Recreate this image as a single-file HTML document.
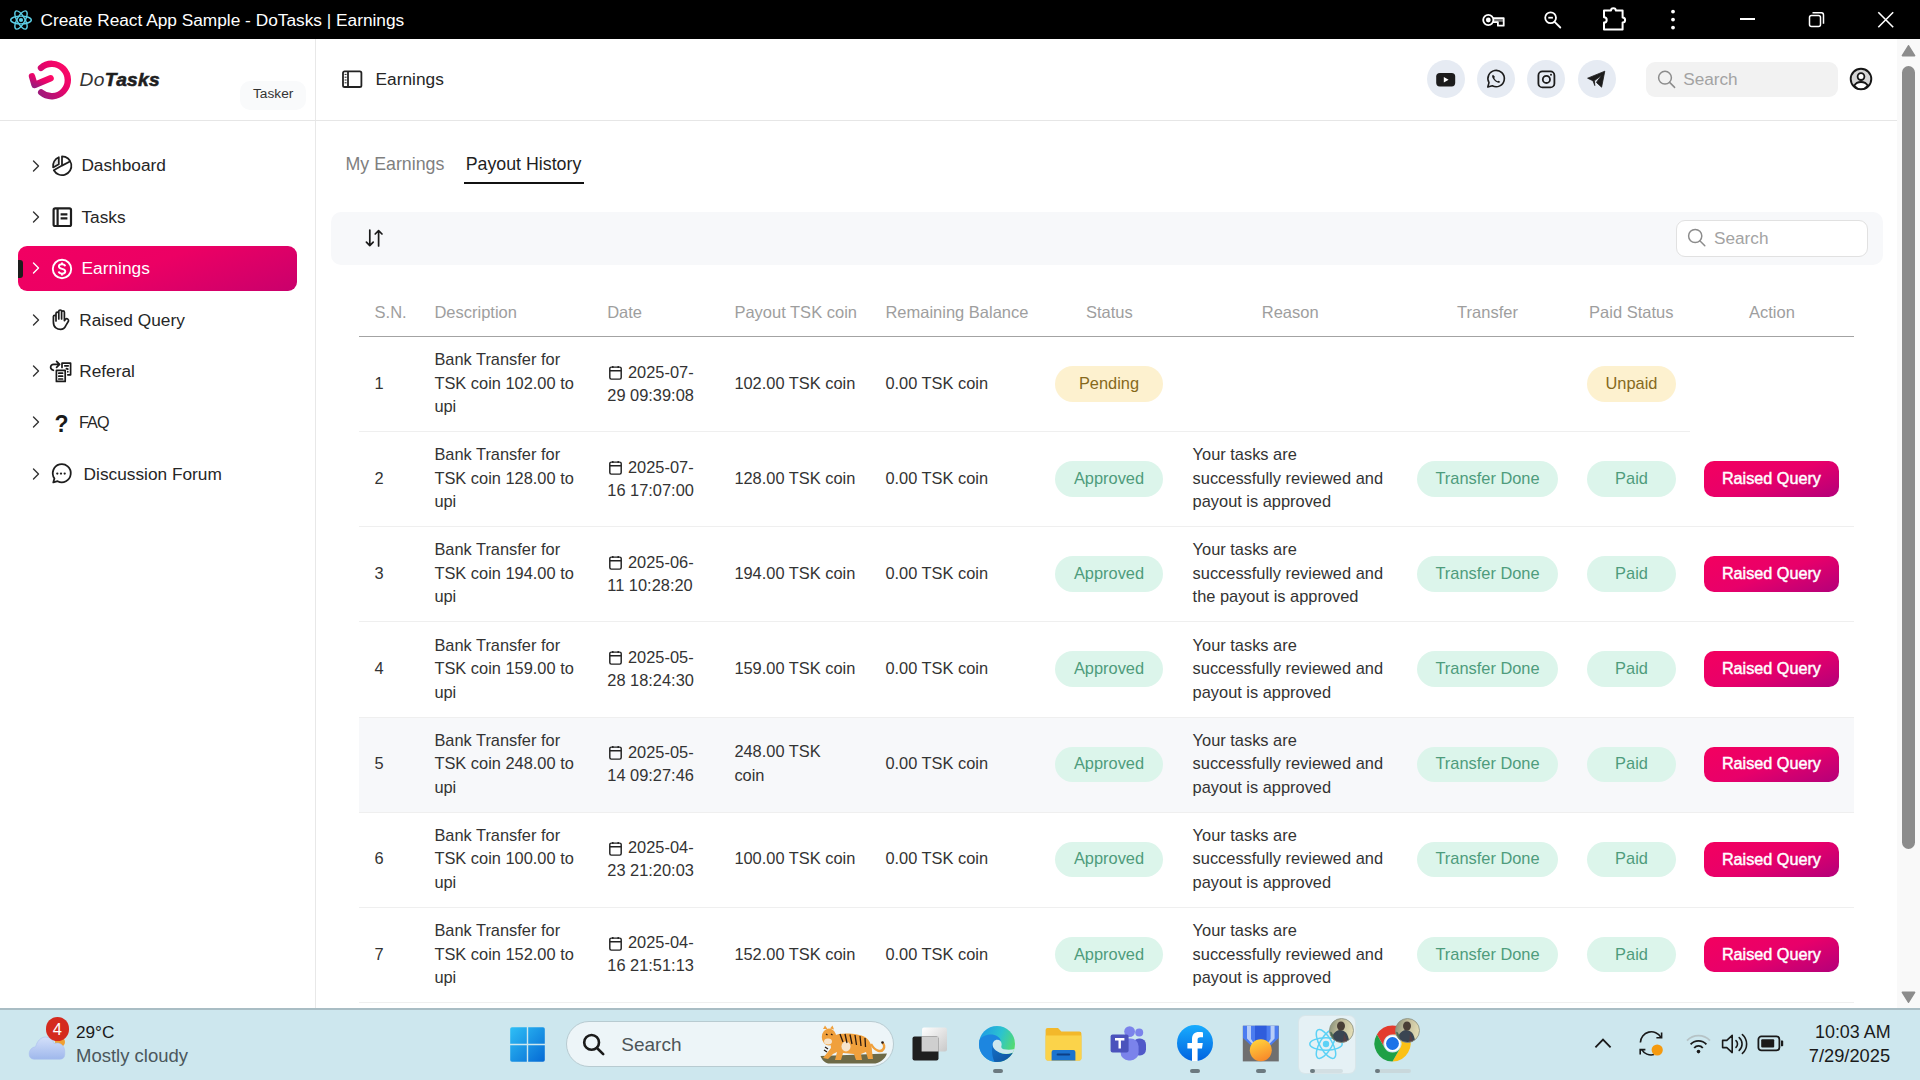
<!DOCTYPE html>
<html><head><meta charset="utf-8">
<style>
*{box-sizing:border-box;margin:0;padding:0}
html,body{width:1920px;height:1080px;overflow:hidden;background:#fff;font-family:"Liberation Sans",sans-serif;color:#262626}
.t{position:absolute;white-space:nowrap}
.b{position:absolute}
.s{position:absolute;overflow:visible}
</style></head><body>
<div class="b" style="left:0px;top:0px;width:1920px;height:39px;background:#000"></div>
<svg class="s" style="left:9px;top:8px;" width="24" height="24" viewBox="-12 -12 24 24"><g fill="none" stroke="#5ccfe6" stroke-width="1.4"><ellipse rx="10.3" ry="3.9"/><ellipse rx="10.3" ry="3.9" transform="rotate(60)"/><ellipse rx="10.3" ry="3.9" transform="rotate(120)"/></g><circle r="2.1" fill="#5ccfe6"/></svg>
<div class="t " style="left:40.5px;top:9.01px;font-size:17.3px;line-height:22px;color:#fff;font-weight:normal;">Create React App Sample - DoTasks | Earnings</div>
<svg class="s" style="left:1480px;top:8px;" width="26" height="22" viewBox="0 0 26 22"><rect x="13" y="10.8" width="10" height="3" fill="#777"/><g fill="none" stroke="#fff" stroke-width="1.8" stroke-linejoin="round"><circle cx="8.3" cy="12" r="5.1"/><path d="M13 10.1 H23.7 V17.7 H17.9 V14.1 H13"/></g><circle cx="8.3" cy="12" r="2.4" fill="#fff"/></svg>
<svg class="s" style="left:1542px;top:10px;" width="22" height="22" viewBox="0 0 22 22"><g fill="none" stroke="#fff" stroke-width="1.8"><circle cx="8.6" cy="7.7" r="5.4"/><path d="M12.6 11.8 L18.3 17.5" stroke-linecap="round"/><path d="M6.3 7.7 H10.9"/></g></svg>
<svg class="s" style="left:1600px;top:4px;" width="30" height="30" viewBox="0 0 30 30"><path d="M4 6.6 H11 A2.4 2.4 0 0 1 15.8 6.6 H22.6 V13.4 A2.5 2.5 0 0 1 22.6 18.4 V25.6 H4 V18.6 A2.6 2.6 0 0 0 4 13.2 Z" fill="none" stroke="#fff" stroke-width="2" stroke-linejoin="round"/></svg>
<svg class="s" style="left:1668px;top:8px;" width="10" height="24" viewBox="0 0 10 24"><circle cx="5" cy="3.6" r="1.9" fill="#fff"/><circle cx="5" cy="11.6" r="1.9" fill="#fff"/><circle cx="5" cy="19.6" r="1.9" fill="#fff"/></svg>
<div class="b" style="left:1740px;top:18px;width:15px;height:1.6px;background:#fff"></div>
<svg class="s" style="left:1806px;top:10px;" width="22" height="22" viewBox="0 0 22 22"><g fill="none" stroke="#fff" stroke-width="1.5"><rect x="3.5" y="5.5" width="11" height="11" rx="2"/><path d="M6.5 2.8 H15.5 A2.2 2.2 0 0 1 17.5 5 V13.8"/></g></svg>
<svg class="s" style="left:1876px;top:10px;" width="20" height="20" viewBox="0 0 20 20"><path d="M2.3 2.3 L17.2 17.2 M17.2 2.3 L2.3 17.2" stroke="#fff" stroke-width="1.6"/></svg>
<div class="b" style="left:315px;top:39px;width:1px;height:969px;background:#e8e8e8"></div>
<div class="b" style="left:0px;top:120px;width:1897px;height:1px;background:#e6e6e6"></div>
<svg class="s" style="left:24px;top:56px;" width="50" height="48" viewBox="0 0 50 48"><defs><linearGradient id="lg1" x1="0" y1="1" x2="1" y2="0"><stop offset="0" stop-color="#9c1b7c"/><stop offset="0.55" stop-color="#e8046a"/><stop offset="1" stop-color="#ff0a66"/></linearGradient></defs>
<g fill="none" stroke="url(#lg1)" stroke-width="6.4" stroke-linecap="round" stroke-linejoin="round">
<path d="M17 11.8 A16.2 16.2 0 1 1 17.2 36.4"/>
<path d="M8 20.4 L10.6 29 L26.6 22.2"/></g></svg>
<div class="t " style="left:79.5px;top:67.65px;font-size:19.2px;line-height:24px;color:#1e1e1e;font-weight:normal;letter-spacing:0.4px"><i style="color:#333">Do</i><b><i style="-webkit-text-stroke:0.6px #1e1e1e;letter-spacing:0.3px">Tasks</i></b></div>
<div class="b" style="left:240px;top:81px;width:66px;height:29px;background:#f9fafb;border-radius:10px"></div>
<div class="t " style="left:253px;top:85.25px;font-size:13.7px;line-height:18px;color:#333;font-weight:normal;">Tasker</div>
<div class="b" style="left:18px;top:246px;width:279px;height:45px;border-radius:9px;background:linear-gradient(160deg,#f20062 0%,#ec0064 45%,#c9006c 100%)"></div>
<div class="b" style="left:18px;top:260px;width:5px;height:18px;background:#1d1d1d;border-radius:0 3px 3px 0"></div>
<svg class="s" style="left:32px;top:159.7px;" width="8" height="13" viewBox="0 0 8 13"><path d="M1.5 1 L6.5 6 L1.5 11" fill="none" stroke="#333" stroke-width="1.4" stroke-linecap="round" stroke-linejoin="round"/></svg>
<svg class="s" style="left:46px;top:150px;" width="32" height="32" viewBox="0 0 32 32"><g fill="none" stroke="#1e1e1e" stroke-width="1.75" stroke-linejoin="round"><path d="M16 15.6 V6.3 A9.4 9.4 0 1 1 7.8 20.3 Z"/><path d="M16 15.6 L24.4 11.3"/><path d="M12.8 7.2 V14.2 L7.1 17.4 A9.4 9.4 0 0 1 12.8 7.2 Z" fill="#e6e6e6"/></g></svg>
<div class="t " style="left:81.4px;top:153.81px;font-size:17.3px;line-height:22px;color:#262626;font-weight:normal;">Dashboard</div>
<svg class="s" style="left:32px;top:210.7px;" width="8" height="13" viewBox="0 0 8 13"><path d="M1.5 1 L6.5 6 L1.5 11" fill="none" stroke="#333" stroke-width="1.4" stroke-linecap="round" stroke-linejoin="round"/></svg>
<svg class="s" style="left:52px;top:207px;" width="21" height="21" viewBox="0 0 21 21"><g fill="none" stroke="#1e1e1e" stroke-width="2.2"><rect x="1.6" y="1.4" width="17.4" height="17.6" rx="1.6"/><path d="M5.6 1.6 V18.8"/><path d="M8.6 7.4 H15.4 M8.6 11.4 H15.4"/></g></svg>
<div class="t " style="left:81.4px;top:205.91px;font-size:17.3px;line-height:22px;color:#262626;font-weight:normal;">Tasks</div>
<svg class="s" style="left:32px;top:261.7px;" width="8" height="13" viewBox="0 0 8 13"><path d="M1.5 1 L6.5 6 L1.5 11" fill="none" stroke="#fff" stroke-width="1.4" stroke-linecap="round" stroke-linejoin="round"/></svg>
<svg class="s" style="left:51px;top:258px;" width="22" height="22" viewBox="0 0 22 22"><g fill="none" stroke="#fff" stroke-width="1.9"><circle cx="11" cy="11" r="9.2"/><path d="M14.2 8.3 C13.8 6.9 12.6 6.3 11 6.3 C9.2 6.3 7.9 7.2 7.9 8.6 C7.9 11.7 14.3 10 14.3 13.3 C14.3 14.9 12.9 15.7 11 15.7 C9.3 15.7 8 15 7.6 13.6 M11 4.4 V6.3 M11 15.7 V17.6" stroke-linecap="butt"/></g></svg>
<div class="t " style="left:81.6px;top:257.01px;font-size:17.3px;line-height:22px;color:#fff;font-weight:normal;">Earnings</div>
<svg class="s" style="left:32px;top:313.7px;" width="8" height="13" viewBox="0 0 8 13"><path d="M1.5 1 L6.5 6 L1.5 11" fill="none" stroke="#333" stroke-width="1.4" stroke-linecap="round" stroke-linejoin="round"/></svg>
<svg class="s" style="left:51px;top:308px;" width="20" height="24" viewBox="0 0 20 24"><path d="M5 13 V5.6 A1.4 1.4 0 0 1 7.8 5.6 V11 V3.4 A1.4 1.4 0 0 1 10.6 3.4 V11 V4.2 A1.4 1.4 0 0 1 13.4 4.2 V12.6 L14.6 11.2 A1.8 1.8 0 0 1 17.4 13.3 L14.8 17.6 C13.6 20.2 11.9 21.4 9.6 21.4 C6.6 21.4 2.4 20 2.4 14 V8.6 A1.3 1.3 0 0 1 5 8.6 Z" fill="none" stroke="#1e1e1e" stroke-width="1.7" stroke-linejoin="round"/></svg>
<div class="t " style="left:79.2px;top:308.81px;font-size:17.3px;line-height:22px;color:#262626;font-weight:normal;">Raised Query</div>
<svg class="s" style="left:32px;top:364.7px;" width="8" height="13" viewBox="0 0 8 13"><path d="M1.5 1 L6.5 6 L1.5 11" fill="none" stroke="#333" stroke-width="1.4" stroke-linecap="round" stroke-linejoin="round"/></svg>
<svg class="s" style="left:46px;top:356px;" width="30" height="30" viewBox="0 0 30 30"><g fill="none" stroke="#1a1a1a" stroke-width="1.7" stroke-linecap="round" stroke-linejoin="round"><path d="M7.4 14.3 C5.6 13.6 4.6 12.6 4.6 11.2 C4.6 9.6 6 8.4 7.6 8.4 H13.4 M10.6 5.4 L13.6 8.4 L10.6 11.4"/><path d="M16 11.4 V7.2 H24.6 V18.8 H21.8"/><path d="M18.8 9.8 H22.2 M20.4 12.6 L21.9 13.1 M21.8 15.6 L21.8 15.8"/><rect x="10.4" y="14.4" width="8.8" height="11"/><path d="M12.8 17.2 H16.6 M12.8 20.2 H16.6 M12.8 23 H16.6"/></g></svg>
<div class="t " style="left:79.2px;top:359.71px;font-size:17.3px;line-height:22px;color:#262626;font-weight:normal;">Referal</div>
<div class="t " style="left:54.5px;top:410.03px;font-size:23px;line-height:28px;color:#1a1a1a;font-weight:bold;">?</div>
<svg class="s" style="left:32px;top:416.2px;" width="8" height="13" viewBox="0 0 8 13"><path d="M1.5 1 L6.5 6 L1.5 11" fill="none" stroke="#333" stroke-width="1.4" stroke-linecap="round" stroke-linejoin="round"/></svg>
<div class="t " style="left:79px;top:411.01px;font-size:17.3px;line-height:22px;color:#262626;font-weight:normal;letter-spacing:-0.9px;font-size:16.2px">FAQ</div>
<svg class="s" style="left:32px;top:468.2px;" width="8" height="13" viewBox="0 0 8 13"><path d="M1.5 1 L6.5 6 L1.5 11" fill="none" stroke="#333" stroke-width="1.4" stroke-linecap="round" stroke-linejoin="round"/></svg>
<svg class="s" style="left:50px;top:463px;" width="22" height="22" viewBox="0 0 22 22"><g fill="none" stroke="#1e1e1e" stroke-width="1.8" stroke-linejoin="round"><path d="M3.3 19.4 L4.4 15.4 A9 9 0 1 1 7.6 18.2 Z"/></g><circle cx="7.3" cy="10.6" r="1.15" fill="#1e1e1e"/><circle cx="11" cy="10.6" r="1.15" fill="#1e1e1e"/><circle cx="14.7" cy="10.6" r="1.15" fill="#1e1e1e"/></svg>
<div class="t " style="left:83.6px;top:462.61px;font-size:17.3px;line-height:22px;color:#262626;font-weight:normal;">Discussion Forum</div>
<svg class="s" style="left:341px;top:69px;" width="22" height="20" viewBox="0 0 22 20"><g fill="none" stroke="#222" stroke-width="1.8"><rect x="2" y="2.4" width="18.4" height="15.6" rx="1.6"/><path d="M7 2.4 V18"/></g><path d="M3.6 5.4 H5.6 M3.6 8.2 H5.6 M3.6 11 H5.6 M3.6 13.8 H5.6" stroke="#222" stroke-width="1"/></svg>
<div class="t " style="left:375.6px;top:68.01px;font-size:17.3px;line-height:22px;color:#262626;font-weight:normal;">Earnings</div>
<div class="b" style="left:1427px;top:60px;width:38px;height:38px;border-radius:50%;background:#e6ebf3"></div>
<div class="b" style="left:1477px;top:60px;width:38px;height:38px;border-radius:50%;background:#e6ebf3"></div>
<div class="b" style="left:1527px;top:60px;width:38px;height:38px;border-radius:50%;background:#e6ebf3"></div>
<div class="b" style="left:1578px;top:60px;width:38px;height:38px;border-radius:50%;background:#e6ebf3"></div>
<svg class="s" style="left:1436px;top:73px;" width="20" height="14" viewBox="0 0 20 14"><rect x="0.2" y="0" width="19" height="13.4" rx="3.6" fill="#1c1c1c"/><path d="M7.8 4 L12.6 6.7 L7.8 9.4 Z" fill="#fff"/></svg>
<svg class="s" style="left:1486px;top:69px;" width="20" height="20" viewBox="0 0 20 20"><g fill="none" stroke="#1c1c1c" stroke-width="1.6" stroke-linejoin="round"><path d="M1.8 18 L3 13.6 A8.2 8.2 0 1 1 6.3 16.8 Z"/></g><path d="M7 5.8 C6.2 6.2 5.9 7 6.4 8.5 C7.2 10.6 9.4 12.8 11.6 13.6 C13 14.1 13.8 13.7 14.3 13 L12.8 11.7 L11.6 12.3 C10.3 11.7 8.9 10.3 8.3 9 L8.9 7.7 Z" fill="#1c1c1c"/></svg>
<svg class="s" style="left:1537px;top:70px;" width="19" height="19" viewBox="0 0 19 19"><g fill="none" stroke="#1c1c1c" stroke-width="1.8"><rect x="1.4" y="1.4" width="16" height="16" rx="4"/><circle cx="9.4" cy="9.4" r="3.6"/></g><circle cx="14" cy="4.8" r="1" fill="#1c1c1c"/></svg>
<svg class="s" style="left:1587px;top:70px;" width="20" height="18" viewBox="0 0 20 18"><path d="M0.6 8.2 L17.8 1.2 L14.6 17.2 L9.4 12.4 L14.6 5.2 L7.4 10.8 L7.8 15.6 L6 10.8 Z" fill="#1c1c1c" stroke="#1c1c1c" stroke-width="0.8" stroke-linejoin="round"/></svg>
<div class="b" style="left:1646px;top:62px;width:192px;height:35px;background:#f2f2f2;border-radius:9px"></div>
<svg class="s" style="left:1657px;top:70px;" width="20" height="20" viewBox="0 0 20 20"><g fill="none" stroke="#8c8c8c" stroke-width="1.5"><circle cx="8" cy="7.7" r="6.4"/><path d="M12.6 12.4 L17.6 17.4" stroke-linecap="round"/></g></svg>
<div class="t " style="left:1683.2px;top:68.04px;font-size:17.2px;line-height:22px;color:#a3a3a3;font-weight:normal;">Search</div>
<svg class="s" style="left:1849px;top:67px;" width="24" height="24" viewBox="0 0 24 24"><circle cx="12" cy="12" r="10.3" fill="#d6d6d6" stroke="#161616" stroke-width="1.9"/><circle cx="12" cy="9.6" r="3.4" fill="#fff" stroke="#161616" stroke-width="1.8"/><path d="M5.2 18.8 C6.6 16.2 9 15 12 15 C15 15 17.4 16.2 18.8 18.8 C17 20.9 14.6 22.2 12 22.2 C9.4 22.2 7 20.9 5.2 18.8 Z" fill="#fff" stroke="#161616" stroke-width="1.8"/></svg>
<div class="b" style="left:1897px;top:39px;width:23px;height:969px;background:#f9f9f9"></div>
<svg class="s" style="left:1900px;top:44px;" width="17" height="14" viewBox="0 0 17 14"><path d="M8.5 1.8 L14.6 11.6 H2.4 Z" fill="#8c8c8c" stroke="#8c8c8c" stroke-width="1.6" stroke-linejoin="round"/></svg>
<div class="b" style="left:1902px;top:66px;width:13px;height:783px;background:#8c8c8c;border-radius:7px"></div>
<svg class="s" style="left:1900px;top:990px;" width="17" height="14" viewBox="0 0 17 14"><path d="M8.5 12.2 L14.6 2.4 H2.4 Z" fill="#8c8c8c" stroke="#8c8c8c" stroke-width="1.6" stroke-linejoin="round"/></svg>
<div class="t " style="left:345.5px;top:152.63px;font-size:17.8px;line-height:22px;color:#7f7f7f;font-weight:normal;">My Earnings</div>
<div class="t " style="left:465.7px;top:152.63px;font-size:17.8px;line-height:22px;color:#1f1f1f;font-weight:normal;">Payout History</div>
<div class="b" style="left:464px;top:182px;width:120px;height:2px;background:#111"></div>
<div class="b" style="left:331px;top:212px;width:1552px;height:53px;background:#f7f8fa;border-radius:10px"></div>
<svg class="s" style="left:364px;top:228px;" width="20" height="20" viewBox="0 0 20 20"><g fill="none" stroke="#1a1a1a" stroke-width="1.7" stroke-linecap="round" stroke-linejoin="round"><path d="M5.8 2 V17.6 M2.4 14.2 L5.8 17.6 L9.2 14.2"/><path d="M14.6 18 V2.6 M11.2 6 L14.6 2.6 L18 6"/></g></svg>
<div class="b" style="left:1676px;top:220px;width:192px;height:37px;background:#fff;border:1px solid #e1e1e1;border-radius:9px"></div>
<svg class="s" style="left:1687px;top:228px;" width="20" height="20" viewBox="0 0 20 20"><g fill="none" stroke="#8c8c8c" stroke-width="1.5"><circle cx="8.2" cy="8" r="6.6"/><path d="M12.8 12.8 L17.8 17.8" stroke-linecap="round"/></g></svg>
<div class="t " style="left:1714px;top:227.04px;font-size:17.2px;line-height:22px;color:#a3a3a3;font-weight:normal;">Search</div>
<div class="t " style="left:374.6px;top:301.28px;font-size:16.5px;line-height:22px;color:#9e9e9e;font-weight:normal;">S.N.</div>
<div class="t " style="left:434.4px;top:301.28px;font-size:16.5px;line-height:22px;color:#9e9e9e;font-weight:normal;">Description</div>
<div class="t " style="left:607.2px;top:301.28px;font-size:16.5px;line-height:22px;color:#9e9e9e;font-weight:normal;">Date</div>
<div class="t " style="left:734.4px;top:301.28px;font-size:16.5px;line-height:22px;color:#9e9e9e;font-weight:normal;">Payout TSK coin</div>
<div class="t " style="left:885.4px;top:301.28px;font-size:16.5px;line-height:22px;color:#9e9e9e;font-weight:normal;">Remaining Balance</div>
<div class="t" style="left:1009.4000000000001px;width:200px;text-align:center;top:301.28px;font-size:16.5px;line-height:22px;color:#9e9e9e;font-weight:normal;">Status</div>
<div class="t" style="left:1190.2px;width:200px;text-align:center;top:301.28px;font-size:16.5px;line-height:22px;color:#9e9e9e;font-weight:normal;">Reason</div>
<div class="t" style="left:1387.5px;width:200px;text-align:center;top:301.28px;font-size:16.5px;line-height:22px;color:#9e9e9e;font-weight:normal;">Transfer</div>
<div class="t" style="left:1531.3px;width:200px;text-align:center;top:301.28px;font-size:16.5px;line-height:22px;color:#9e9e9e;font-weight:normal;">Paid Status</div>
<div class="t" style="left:1671.9px;width:200px;text-align:center;top:301.28px;font-size:16.5px;line-height:22px;color:#9e9e9e;font-weight:normal;">Action</div>
<div class="b" style="left:359px;top:336px;width:1495px;height:1.2px;background:#a3a3a3"></div>
<div class="b" style="left:359px;top:431px;width:1331px;height:1px;background:#efefef"></div>
<div class="t " style="left:374.6px;top:371.67px;font-size:16.4px;line-height:23.5px;color:#333333;font-weight:normal;">1</div>
<div class="t " style="left:434.4px;top:348.17px;font-size:16.4px;line-height:23.5px;color:#333333;font-weight:normal;">Bank Transfer for<br>TSK coin 102.00 to<br>upi</div>
<svg class="s" style="left:607.5px;top:364.9px;" width="15" height="15" viewBox="0 0 15 15"><g fill="none" stroke="#222" stroke-width="1.45"><rect x="1.8" y="2.1" width="11.4" height="12" rx="1.5"/><path d="M1.8 5.7 H13.2 M4.8 1 V3 M10.2 1 V3"/></g></svg>
<div class="t " style="left:628px;top:360.62px;font-size:16.4px;line-height:23.5px;color:#333333;font-weight:normal;">2025-07-</div>
<div class="t " style="left:607.3px;top:383.62px;font-size:16.4px;line-height:23.5px;color:#333333;font-weight:normal;">29 09:39:08</div>
<div class="t " style="left:734.4px;top:371.67px;font-size:16.4px;line-height:23.5px;color:#333333;font-weight:normal;">102.00 TSK coin</div>
<div class="t " style="left:885.4px;top:371.67px;font-size:16.4px;line-height:23.5px;color:#333333;font-weight:normal;">0.00 TSK coin</div>
<div class="b" style="left:1055px;top:366px;width:108px;height:35.6px;background:#fdf1cf;border-radius:18px"></div>
<div class="t" style="left:1055.0px;width:108px;text-align:center;top:371.67px;font-size:16.4px;line-height:23.5px;color:#86691c;font-weight:normal;">Pending</div>
<div class="b" style="left:1587px;top:366px;width:89px;height:35.6px;background:#fdf1cf;border-radius:18px"></div>
<div class="t" style="left:1587.0px;width:89px;text-align:center;top:371.67px;font-size:16.4px;line-height:23.5px;color:#86691c;font-weight:normal;">Unpaid</div>
<div class="b" style="left:359px;top:526px;width:1495px;height:1px;background:#efefef"></div>
<div class="t " style="left:374.6px;top:466.67px;font-size:16.4px;line-height:23.5px;color:#333333;font-weight:normal;">2</div>
<div class="t " style="left:434.4px;top:443.17px;font-size:16.4px;line-height:23.5px;color:#333333;font-weight:normal;">Bank Transfer for<br>TSK coin 128.00 to<br>upi</div>
<svg class="s" style="left:607.5px;top:459.9px;" width="15" height="15" viewBox="0 0 15 15"><g fill="none" stroke="#222" stroke-width="1.45"><rect x="1.8" y="2.1" width="11.4" height="12" rx="1.5"/><path d="M1.8 5.7 H13.2 M4.8 1 V3 M10.2 1 V3"/></g></svg>
<div class="t " style="left:628px;top:455.62px;font-size:16.4px;line-height:23.5px;color:#333333;font-weight:normal;">2025-07-</div>
<div class="t " style="left:607.3px;top:478.62px;font-size:16.4px;line-height:23.5px;color:#333333;font-weight:normal;">16 17:07:00</div>
<div class="t " style="left:734.4px;top:466.67px;font-size:16.4px;line-height:23.5px;color:#333333;font-weight:normal;">128.00 TSK coin</div>
<div class="t " style="left:885.4px;top:466.67px;font-size:16.4px;line-height:23.5px;color:#333333;font-weight:normal;">0.00 TSK coin</div>
<div class="b" style="left:1055px;top:461.0px;width:108px;height:35.6px;background:#dcf5eb;border-radius:18px"></div>
<div class="t" style="left:1055.0px;width:108px;text-align:center;top:466.67px;font-size:16.4px;line-height:23.5px;color:#4e9c7c;font-weight:normal;">Approved</div>
<div class="t " style="left:1192.6px;top:443.17px;font-size:16.4px;line-height:23.5px;color:#333333;font-weight:normal;">Your tasks are<br>successfully reviewed and<br>payout is approved</div>
<div class="b" style="left:1417px;top:461.0px;width:141px;height:35.6px;background:#dcf5eb;border-radius:18px"></div>
<div class="t" style="left:1417.0px;width:141px;text-align:center;top:466.67px;font-size:16.4px;line-height:23.5px;color:#4e9c7c;font-weight:normal;">Transfer Done</div>
<div class="b" style="left:1587px;top:461.0px;width:89px;height:35.6px;background:#dcf5eb;border-radius:18px"></div>
<div class="t" style="left:1587.0px;width:89px;text-align:center;top:466.67px;font-size:16.4px;line-height:23.5px;color:#4e9c7c;font-weight:normal;">Paid</div>
<div class="b" style="left:1704px;top:461.0px;width:135px;height:35.6px;border-radius:10px;background:linear-gradient(160deg,#f3005f 0%,#e8006a 50%,#b3007a 100%)"></div>
<div class="t" style="left:1703.9px;width:135px;text-align:center;top:466.94px;font-size:16.2px;line-height:23.5px;color:#fff;font-weight:normal;-webkit-text-stroke:0.45px #fff">Raised Query</div>
<div class="b" style="left:359px;top:621px;width:1495px;height:1px;background:#efefef"></div>
<div class="t " style="left:374.6px;top:561.84px;font-size:16.4px;line-height:23.5px;color:#333333;font-weight:normal;">3</div>
<div class="t " style="left:434.4px;top:538.34px;font-size:16.4px;line-height:23.5px;color:#333333;font-weight:normal;">Bank Transfer for<br>TSK coin 194.00 to<br>upi</div>
<svg class="s" style="left:607.5px;top:555.0699999999999px;" width="15" height="15" viewBox="0 0 15 15"><g fill="none" stroke="#222" stroke-width="1.45"><rect x="1.8" y="2.1" width="11.4" height="12" rx="1.5"/><path d="M1.8 5.7 H13.2 M4.8 1 V3 M10.2 1 V3"/></g></svg>
<div class="t " style="left:628px;top:550.79px;font-size:16.4px;line-height:23.5px;color:#333333;font-weight:normal;">2025-06-</div>
<div class="t " style="left:607.3px;top:573.79px;font-size:16.4px;line-height:23.5px;color:#333333;font-weight:normal;">11 10:28:20</div>
<div class="t " style="left:734.4px;top:561.84px;font-size:16.4px;line-height:23.5px;color:#333333;font-weight:normal;">194.00 TSK coin</div>
<div class="t " style="left:885.4px;top:561.84px;font-size:16.4px;line-height:23.5px;color:#333333;font-weight:normal;">0.00 TSK coin</div>
<div class="b" style="left:1055px;top:556.17px;width:108px;height:35.6px;background:#dcf5eb;border-radius:18px"></div>
<div class="t" style="left:1055.0px;width:108px;text-align:center;top:561.84px;font-size:16.4px;line-height:23.5px;color:#4e9c7c;font-weight:normal;">Approved</div>
<div class="t " style="left:1192.6px;top:538.34px;font-size:16.4px;line-height:23.5px;color:#333333;font-weight:normal;">Your tasks are<br>successfully reviewed and<br>the payout is approved</div>
<div class="b" style="left:1417px;top:556.17px;width:141px;height:35.6px;background:#dcf5eb;border-radius:18px"></div>
<div class="t" style="left:1417.0px;width:141px;text-align:center;top:561.84px;font-size:16.4px;line-height:23.5px;color:#4e9c7c;font-weight:normal;">Transfer Done</div>
<div class="b" style="left:1587px;top:556.17px;width:89px;height:35.6px;background:#dcf5eb;border-radius:18px"></div>
<div class="t" style="left:1587.0px;width:89px;text-align:center;top:561.84px;font-size:16.4px;line-height:23.5px;color:#4e9c7c;font-weight:normal;">Paid</div>
<div class="b" style="left:1704px;top:556.17px;width:135px;height:35.6px;border-radius:10px;background:linear-gradient(160deg,#f3005f 0%,#e8006a 50%,#b3007a 100%)"></div>
<div class="t" style="left:1703.9px;width:135px;text-align:center;top:562.11px;font-size:16.2px;line-height:23.5px;color:#fff;font-weight:normal;-webkit-text-stroke:0.45px #fff">Raised Query</div>
<div class="b" style="left:359px;top:717px;width:1495px;height:1px;background:#efefef"></div>
<div class="t " style="left:374.6px;top:657.01px;font-size:16.4px;line-height:23.5px;color:#333333;font-weight:normal;">4</div>
<div class="t " style="left:434.4px;top:633.51px;font-size:16.4px;line-height:23.5px;color:#333333;font-weight:normal;">Bank Transfer for<br>TSK coin 159.00 to<br>upi</div>
<svg class="s" style="left:607.5px;top:650.24px;" width="15" height="15" viewBox="0 0 15 15"><g fill="none" stroke="#222" stroke-width="1.45"><rect x="1.8" y="2.1" width="11.4" height="12" rx="1.5"/><path d="M1.8 5.7 H13.2 M4.8 1 V3 M10.2 1 V3"/></g></svg>
<div class="t " style="left:628px;top:645.96px;font-size:16.4px;line-height:23.5px;color:#333333;font-weight:normal;">2025-05-</div>
<div class="t " style="left:607.3px;top:668.96px;font-size:16.4px;line-height:23.5px;color:#333333;font-weight:normal;">28 18:24:30</div>
<div class="t " style="left:734.4px;top:657.01px;font-size:16.4px;line-height:23.5px;color:#333333;font-weight:normal;">159.00 TSK coin</div>
<div class="t " style="left:885.4px;top:657.01px;font-size:16.4px;line-height:23.5px;color:#333333;font-weight:normal;">0.00 TSK coin</div>
<div class="b" style="left:1055px;top:651.34px;width:108px;height:35.6px;background:#dcf5eb;border-radius:18px"></div>
<div class="t" style="left:1055.0px;width:108px;text-align:center;top:657.01px;font-size:16.4px;line-height:23.5px;color:#4e9c7c;font-weight:normal;">Approved</div>
<div class="t " style="left:1192.6px;top:633.51px;font-size:16.4px;line-height:23.5px;color:#333333;font-weight:normal;">Your tasks are<br>successfully reviewed and<br>payout is approved</div>
<div class="b" style="left:1417px;top:651.34px;width:141px;height:35.6px;background:#dcf5eb;border-radius:18px"></div>
<div class="t" style="left:1417.0px;width:141px;text-align:center;top:657.01px;font-size:16.4px;line-height:23.5px;color:#4e9c7c;font-weight:normal;">Transfer Done</div>
<div class="b" style="left:1587px;top:651.34px;width:89px;height:35.6px;background:#dcf5eb;border-radius:18px"></div>
<div class="t" style="left:1587.0px;width:89px;text-align:center;top:657.01px;font-size:16.4px;line-height:23.5px;color:#4e9c7c;font-weight:normal;">Paid</div>
<div class="b" style="left:1704px;top:651.34px;width:135px;height:35.6px;border-radius:10px;background:linear-gradient(160deg,#f3005f 0%,#e8006a 50%,#b3007a 100%)"></div>
<div class="t" style="left:1703.9px;width:135px;text-align:center;top:657.28px;font-size:16.2px;line-height:23.5px;color:#fff;font-weight:normal;-webkit-text-stroke:0.45px #fff">Raised Query</div>
<div class="b" style="left:359px;top:718px;width:1495px;height:94px;background:#f7f8fa"></div>
<div class="b" style="left:359px;top:812px;width:1495px;height:1px;background:#efefef"></div>
<div class="t " style="left:374.6px;top:752.18px;font-size:16.4px;line-height:23.5px;color:#333333;font-weight:normal;">5</div>
<div class="t " style="left:434.4px;top:728.68px;font-size:16.4px;line-height:23.5px;color:#333333;font-weight:normal;">Bank Transfer for<br>TSK coin 248.00 to<br>upi</div>
<svg class="s" style="left:607.5px;top:745.41px;" width="15" height="15" viewBox="0 0 15 15"><g fill="none" stroke="#222" stroke-width="1.45"><rect x="1.8" y="2.1" width="11.4" height="12" rx="1.5"/><path d="M1.8 5.7 H13.2 M4.8 1 V3 M10.2 1 V3"/></g></svg>
<div class="t " style="left:628px;top:741.13px;font-size:16.4px;line-height:23.5px;color:#333333;font-weight:normal;">2025-05-</div>
<div class="t " style="left:607.3px;top:764.13px;font-size:16.4px;line-height:23.5px;color:#333333;font-weight:normal;">14 09:27:46</div>
<div class="t " style="left:734.4px;top:740.43px;font-size:16.4px;line-height:23.5px;color:#333333;font-weight:normal;">248.00 TSK<br>coin</div>
<div class="t " style="left:885.4px;top:752.18px;font-size:16.4px;line-height:23.5px;color:#333333;font-weight:normal;">0.00 TSK coin</div>
<div class="b" style="left:1055px;top:746.51px;width:108px;height:35.6px;background:#dcf5eb;border-radius:18px"></div>
<div class="t" style="left:1055.0px;width:108px;text-align:center;top:752.18px;font-size:16.4px;line-height:23.5px;color:#4e9c7c;font-weight:normal;">Approved</div>
<div class="t " style="left:1192.6px;top:728.68px;font-size:16.4px;line-height:23.5px;color:#333333;font-weight:normal;">Your tasks are<br>successfully reviewed and<br>payout is approved</div>
<div class="b" style="left:1417px;top:746.51px;width:141px;height:35.6px;background:#dcf5eb;border-radius:18px"></div>
<div class="t" style="left:1417.0px;width:141px;text-align:center;top:752.18px;font-size:16.4px;line-height:23.5px;color:#4e9c7c;font-weight:normal;">Transfer Done</div>
<div class="b" style="left:1587px;top:746.51px;width:89px;height:35.6px;background:#dcf5eb;border-radius:18px"></div>
<div class="t" style="left:1587.0px;width:89px;text-align:center;top:752.18px;font-size:16.4px;line-height:23.5px;color:#4e9c7c;font-weight:normal;">Paid</div>
<div class="b" style="left:1704px;top:746.51px;width:135px;height:35.6px;border-radius:10px;background:linear-gradient(160deg,#f3005f 0%,#e8006a 50%,#b3007a 100%)"></div>
<div class="t" style="left:1703.9px;width:135px;text-align:center;top:752.45px;font-size:16.2px;line-height:23.5px;color:#fff;font-weight:normal;-webkit-text-stroke:0.45px #fff">Raised Query</div>
<div class="b" style="left:359px;top:907px;width:1495px;height:1px;background:#efefef"></div>
<div class="t " style="left:374.6px;top:847.35px;font-size:16.4px;line-height:23.5px;color:#333333;font-weight:normal;">6</div>
<div class="t " style="left:434.4px;top:823.85px;font-size:16.4px;line-height:23.5px;color:#333333;font-weight:normal;">Bank Transfer for<br>TSK coin 100.00 to<br>upi</div>
<svg class="s" style="left:607.5px;top:840.58px;" width="15" height="15" viewBox="0 0 15 15"><g fill="none" stroke="#222" stroke-width="1.45"><rect x="1.8" y="2.1" width="11.4" height="12" rx="1.5"/><path d="M1.8 5.7 H13.2 M4.8 1 V3 M10.2 1 V3"/></g></svg>
<div class="t " style="left:628px;top:836.30px;font-size:16.4px;line-height:23.5px;color:#333333;font-weight:normal;">2025-04-</div>
<div class="t " style="left:607.3px;top:859.30px;font-size:16.4px;line-height:23.5px;color:#333333;font-weight:normal;">23 21:20:03</div>
<div class="t " style="left:734.4px;top:847.35px;font-size:16.4px;line-height:23.5px;color:#333333;font-weight:normal;">100.00 TSK coin</div>
<div class="t " style="left:885.4px;top:847.35px;font-size:16.4px;line-height:23.5px;color:#333333;font-weight:normal;">0.00 TSK coin</div>
<div class="b" style="left:1055px;top:841.6800000000001px;width:108px;height:35.6px;background:#dcf5eb;border-radius:18px"></div>
<div class="t" style="left:1055.0px;width:108px;text-align:center;top:847.35px;font-size:16.4px;line-height:23.5px;color:#4e9c7c;font-weight:normal;">Approved</div>
<div class="t " style="left:1192.6px;top:823.85px;font-size:16.4px;line-height:23.5px;color:#333333;font-weight:normal;">Your tasks are<br>successfully reviewed and<br>payout is approved</div>
<div class="b" style="left:1417px;top:841.6800000000001px;width:141px;height:35.6px;background:#dcf5eb;border-radius:18px"></div>
<div class="t" style="left:1417.0px;width:141px;text-align:center;top:847.35px;font-size:16.4px;line-height:23.5px;color:#4e9c7c;font-weight:normal;">Transfer Done</div>
<div class="b" style="left:1587px;top:841.6800000000001px;width:89px;height:35.6px;background:#dcf5eb;border-radius:18px"></div>
<div class="t" style="left:1587.0px;width:89px;text-align:center;top:847.35px;font-size:16.4px;line-height:23.5px;color:#4e9c7c;font-weight:normal;">Paid</div>
<div class="b" style="left:1704px;top:841.6800000000001px;width:135px;height:35.6px;border-radius:10px;background:linear-gradient(160deg,#f3005f 0%,#e8006a 50%,#b3007a 100%)"></div>
<div class="t" style="left:1703.9px;width:135px;text-align:center;top:847.62px;font-size:16.2px;line-height:23.5px;color:#fff;font-weight:normal;-webkit-text-stroke:0.45px #fff">Raised Query</div>
<div class="b" style="left:359px;top:1002px;width:1495px;height:1px;background:#efefef"></div>
<div class="t " style="left:374.6px;top:942.52px;font-size:16.4px;line-height:23.5px;color:#333333;font-weight:normal;">7</div>
<div class="t " style="left:434.4px;top:919.02px;font-size:16.4px;line-height:23.5px;color:#333333;font-weight:normal;">Bank Transfer for<br>TSK coin 152.00 to<br>upi</div>
<svg class="s" style="left:607.5px;top:935.75px;" width="15" height="15" viewBox="0 0 15 15"><g fill="none" stroke="#222" stroke-width="1.45"><rect x="1.8" y="2.1" width="11.4" height="12" rx="1.5"/><path d="M1.8 5.7 H13.2 M4.8 1 V3 M10.2 1 V3"/></g></svg>
<div class="t " style="left:628px;top:931.47px;font-size:16.4px;line-height:23.5px;color:#333333;font-weight:normal;">2025-04-</div>
<div class="t " style="left:607.3px;top:954.47px;font-size:16.4px;line-height:23.5px;color:#333333;font-weight:normal;">16 21:51:13</div>
<div class="t " style="left:734.4px;top:942.52px;font-size:16.4px;line-height:23.5px;color:#333333;font-weight:normal;">152.00 TSK coin</div>
<div class="t " style="left:885.4px;top:942.52px;font-size:16.4px;line-height:23.5px;color:#333333;font-weight:normal;">0.00 TSK coin</div>
<div class="b" style="left:1055px;top:936.85px;width:108px;height:35.6px;background:#dcf5eb;border-radius:18px"></div>
<div class="t" style="left:1055.0px;width:108px;text-align:center;top:942.52px;font-size:16.4px;line-height:23.5px;color:#4e9c7c;font-weight:normal;">Approved</div>
<div class="t " style="left:1192.6px;top:919.02px;font-size:16.4px;line-height:23.5px;color:#333333;font-weight:normal;">Your tasks are<br>successfully reviewed and<br>payout is approved</div>
<div class="b" style="left:1417px;top:936.85px;width:141px;height:35.6px;background:#dcf5eb;border-radius:18px"></div>
<div class="t" style="left:1417.0px;width:141px;text-align:center;top:942.52px;font-size:16.4px;line-height:23.5px;color:#4e9c7c;font-weight:normal;">Transfer Done</div>
<div class="b" style="left:1587px;top:936.85px;width:89px;height:35.6px;background:#dcf5eb;border-radius:18px"></div>
<div class="t" style="left:1587.0px;width:89px;text-align:center;top:942.52px;font-size:16.4px;line-height:23.5px;color:#4e9c7c;font-weight:normal;">Paid</div>
<div class="b" style="left:1704px;top:936.85px;width:135px;height:35.6px;border-radius:10px;background:linear-gradient(160deg,#f3005f 0%,#e8006a 50%,#b3007a 100%)"></div>
<div class="t" style="left:1703.9px;width:135px;text-align:center;top:942.79px;font-size:16.2px;line-height:23.5px;color:#fff;font-weight:normal;-webkit-text-stroke:0.45px #fff">Raised Query</div>
<div class="b" style="left:0px;top:1008px;width:1920px;height:72px;background:#cde7ee"></div>
<div class="b" style="left:0px;top:1008px;width:1920px;height:2px;background:#a9bdc4"></div>
<svg class="s" style="left:26px;top:1034px;" width="42" height="28" viewBox="0 0 42 28"><defs><linearGradient id="cl" x1="0" y1="0" x2="0" y2="1"><stop offset="0" stop-color="#d4e0fa"/><stop offset="1" stop-color="#9fb8ec"/></linearGradient></defs><circle cx="34" cy="8" r="5" fill="#f0a030"/><path d="M8 25.2 C4.8 25.2 3.2 23 3.2 20 C3.2 16.4 5.6 13.2 9.6 12.8 C11 7 15.2 3 19.4 3 C23.6 3 26.8 5.8 28 9.6 C29.2 9 30.6 8.8 32 9 C35.8 9.6 38.7 13 38.7 17.4 V20.4 C38.7 23.4 37 25.2 34 25.2 Z" fill="url(#cl)" stroke="#a9bfee" stroke-width="0.6"/></svg>
<div class="b" style="left:45.5px;top:1017.4px;width:23.6px;height:23.6px;background:#d42a1e;border-radius:50%"></div>
<div class="t" style="left:45.8px;width:23px;text-align:center;top:1019.08px;font-size:16.5px;line-height:20px;color:#fff;font-weight:normal;">4</div>
<div class="t " style="left:76px;top:1021.04px;font-size:17.2px;line-height:22px;color:#1a1a1a;font-weight:normal;">29°C</div>
<div class="t " style="left:76px;top:1044.59px;font-size:18.5px;line-height:22px;color:#4b575c;font-weight:normal;">Mostly cloudy</div>
<svg class="s" style="left:510px;top:1027px;" width="35" height="35" viewBox="0 0 35 35"><defs><linearGradient id="wl" gradientUnits="userSpaceOnUse" x1="0" y1="0" x2="35" y2="35"><stop offset="0" stop-color="#2fc0f6"/><stop offset="1" stop-color="#0569d4"/></linearGradient></defs><g fill="url(#wl)"><path d="M2 0.2 H16.8 V16.8 H0.2 V2 A1.8 1.8 0 0 1 2 0.2 Z"/><path d="M18.2 0.2 H33 A1.8 1.8 0 0 1 34.8 2 V16.8 H18.2 Z"/><path d="M0.2 18.2 H16.8 V34.8 H2 A1.8 1.8 0 0 1 0.2 33 Z"/><path d="M18.2 18.2 H34.8 V33 A1.8 1.8 0 0 1 33 34.8 H18.2 Z"/></g></svg>
<div class="b" style="left:566px;top:1021px;width:328px;height:46px;background:#edf5f8;border:1px solid #b8cbd1;border-radius:23px"></div>
<svg class="s" style="left:582px;top:1033px;" width="24" height="24" viewBox="0 0 24 24"><g fill="none" stroke="#1a1a1a" stroke-width="2.6"><circle cx="9.6" cy="9.4" r="7.4"/><path d="M15 15 L21.2 21.2" stroke-linecap="round"/></g></svg>
<div class="t " style="left:621.25px;top:1033.42px;font-size:19px;line-height:24px;color:#4e5558;font-weight:normal;">Search</div>
<svg class="s" style="left:818px;top:1024px;" width="72" height="42" viewBox="0 0 72 42"><path d="M2.5 32 L69 29.5 C67 35 62 39.6 55 39.6 H12 C7 39.6 4 36 2.5 32 Z" fill="#6e6a47"/><path d="M15 12 C22 8 40 9 47 13 C52 16 54 22 54 27 L55 35 L50 35 L48 28 L43 30 L44 36 L38 36 L36 30 L25 29 L23 36 L17 36 L19 28 L15 30 L10 35 L5 34 L13 24 C12 20 13 15 15 12 Z" fill="#f0a03c"/><path d="M53 20 C57 27 63 29 65.5 25 C66.6 23 66.4 20 64.4 19" stroke="#f0a03c" stroke-width="2.4" fill="none"/><ellipse cx="11" cy="13" rx="7.2" ry="8.6" fill="#f0a03c"/><path d="M5 5 L7 1.5 L9.5 5 M12 4.5 L14.5 1.5 L16 5.5" fill="#f0a03c"/><ellipse cx="10" cy="17.5" rx="4" ry="3" fill="#f6e4cc"/><ellipse cx="28" cy="22.5" rx="4.5" ry="5" fill="#f6e4cc"/><g stroke="#2b1a10" stroke-width="1.3" fill="none"><path d="M22 10 L25 18 M27 10 L29 19 M32 10.5 L34 20 M37 11 L38.5 21 M42 12 L43 22 M47 14 L47.5 23 M8 10 L9.5 11 M13 10 L14.5 11 M6 26 L9 28 M7 23 L10 25"/></g><circle cx="64.5" cy="18.5" r="1.3" fill="#2b1a10"/></svg>
<svg class="s" style="left:912px;top:1027px;" width="36" height="34" viewBox="0 0 36 34"><defs><linearGradient id="tvl" x1="0" y1="0" x2="1" y2="1"><stop offset="0" stop-color="#ffffff"/><stop offset="1" stop-color="#c9c9c9"/></linearGradient></defs><rect x="10" y="0.5" width="25" height="24" rx="2" fill="url(#tvl)"/><rect x="0.5" y="9.5" width="26" height="24" rx="2" fill="#1f1f1f"/><rect x="9.6" y="9.5" width="17" height="15" fill="#cfcfcf"/></svg>
<svg class="s" style="left:978px;top:1025px;" width="38" height="38" viewBox="0 0 38 38"><defs><linearGradient id="e1" x1="0" y1="0.3" x2="1" y2="0.7"><stop offset="0" stop-color="#1e9ae6"/><stop offset="0.5" stop-color="#2cc3cf"/><stop offset="1" stop-color="#5ee05c"/></linearGradient><linearGradient id="e2" x1="0" y1="0" x2="1" y2="1"><stop offset="0" stop-color="#1472c8"/><stop offset="1" stop-color="#0f4c98"/></linearGradient><clipPath id="ec"><circle cx="19" cy="19" r="18"/></clipPath></defs><g clip-path="url(#ec)"><rect x="0" y="0" width="38" height="38" fill="url(#e1)"/><path d="M0 16.8 C3.5 11 9.5 9.2 14 9.6 C18.5 10 21.6 12.4 22.6 15 L18 38 L0 38 Z" fill="#1d86e0"/><path d="M14.7 19.5 C13.4 25 13.8 32 17 38 L38 38 L38 26.6 C32.6 29.5 26 30 21.5 27.5 C17.5 25.5 14.8 22.5 14.7 19.5 Z" fill="url(#e2)"/><path d="M19.2 14.8 C16.6 14.8 14.7 17 14.7 19.8 C14.7 23.2 17.6 25.8 21.5 27.5 C26 29.5 31.5 29.6 38 26.4 L38 23.6 C34.5 24.8 29.6 25 25.6 24.2 C23.4 23.6 23 22.4 23.5 20.6 C24.2 17.4 22.4 14.8 19.2 14.8 Z" fill="#cde7ee"/></g></svg>
<div class="b" style="left:992.5px;top:1068.5px;width:10px;height:4px;background:#6c7a80;border-radius:2px"></div>
<svg class="s" style="left:1045px;top:1027px;" width="37" height="34" viewBox="0 0 37 34"><path d="M0.6 3 A2 2 0 0 1 2.6 1 H13 L16.4 4.4 H34.4 A2 2 0 0 1 36.4 6.4 V31.6 A2 2 0 0 1 34.4 33.6 H2.6 A2 2 0 0 1 0.6 31.6 Z" fill="#f3b82a"/><path d="M0.6 8.4 H36.4 V31.6 A2 2 0 0 1 34.4 33.6 H2.6 A2 2 0 0 1 0.6 31.6 Z" fill="#fbd34a"/><path d="M6.6 33.6 V25 A2 2 0 0 1 8.6 23 H28.4 A2 2 0 0 1 30.4 25 V33.6 Z" fill="#1c73cf"/><rect x="11.6" y="26.4" width="13.6" height="2.2" rx="1" fill="#0d3f86"/></svg>
<svg class="s" style="left:1110px;top:1026px;" width="37" height="35" viewBox="0 0 37 35"><circle cx="29.2" cy="6.4" r="4" fill="#7b83eb"/><rect x="23" y="12.4" width="13" height="17" rx="6" fill="#5059c9"/><circle cx="19.6" cy="5.6" r="5.4" fill="#7b83eb"/><rect x="10.6" y="12.4" width="18" height="22" rx="8" fill="#7b83eb"/><rect x="0.6" y="8.6" width="18" height="18" rx="2" fill="#4b53bc"/><path d="M5 13.2 H14.4 M9.7 13.2 V22.6" stroke="#fff" stroke-width="2.4"/></svg>
<svg class="s" style="left:1177px;top:1025px;" width="36" height="36" viewBox="0 0 36 36"><defs><linearGradient id="fb" x1="0" y1="0" x2="0" y2="1"><stop offset="0" stop-color="#18acfe"/><stop offset="1" stop-color="#0163e0"/></linearGradient></defs><circle cx="18" cy="18" r="18" fill="url(#fb)"/><path d="M20.6 36 V23.4 H25 L25.8 18 H20.6 V14.8 C20.6 13.2 21.2 12.2 23.4 12.2 H26 V7.4 C25.2 7.2 23.6 7 21.8 7 C17.6 7 15 9.6 15 14 V18 H10.4 V23.4 H15 V36 Z" fill="#fff"/></svg>
<div class="b" style="left:1190px;top:1068.5px;width:10px;height:4px;background:#6c7a80;border-radius:2px"></div>
<svg class="s" style="left:1242px;top:1025px;" width="38" height="38" viewBox="0 0 38 38"><defs><linearGradient id="md" x1="0.3" y1="0" x2="0.7" y2="1"><stop offset="0" stop-color="#ffd23c"/><stop offset="1" stop-color="#f7862a"/></linearGradient></defs><rect x="0.8" y="0.8" width="36" height="35.6" fill="#6f6f6f"/><path d="M1 0.8 H36.6 V13 L27 22 H10.6 L1 13 Z" fill="#4b7cf0"/><path d="M5 0.8 H9 V14 L13 20 H11.4 L5 13.6 Z M28.6 0.8 H32.6 V13.6 L26.2 20 H24.6 L28.6 14 Z" fill="#b7cdf7"/><rect x="13" y="0.8" width="11.6" height="20" fill="#2f5ddc"/><circle cx="18.8" cy="25.2" r="11" fill="url(#md)"/></svg>
<div class="b" style="left:1256px;top:1068.5px;width:10px;height:4px;background:#6c7a80;border-radius:2px"></div>
<div class="b" style="left:1299px;top:1016px;width:56px;height:57px;background:#e5f1f5;border-radius:6px;box-shadow:0 0 0 1px #d8e6ea"></div>
<svg class="s" style="left:1308px;top:1026px;" width="38" height="36" viewBox="0 0 38 36"><g transform="translate(18,18)"><g fill="none" stroke="#5cd2f6" stroke-width="1.5"><ellipse rx="16.2" ry="6.2"/><ellipse rx="16.2" ry="6.2" transform="rotate(60)"/><ellipse rx="16.2" ry="6.2" transform="rotate(120)"/></g><circle r="3.2" fill="#5cd2f6"/></g></svg>
<svg class="s" style="left:1329px;top:1018px;" width="25" height="25" viewBox="0 0 25 25"><defs><linearGradient id="avb" x1="0" y1="0" x2="1" y2="0.3"><stop offset="0" stop-color="#7d8a72"/><stop offset="0.45" stop-color="#bdb898"/><stop offset="1" stop-color="#e2dcb4"/></linearGradient><clipPath id="avc"><circle cx="12.5" cy="12.5" r="12"/></clipPath></defs><g clip-path="url(#avc)"><rect width="25" height="25" fill="url(#avb)"/><path d="M2 26 C2 17 6 12.5 11 12 C16 12.5 19.5 15 20.5 26 Z" fill="#3a4552"/><path d="M0 14 C3 13 5 16 5 26 H0 Z" fill="#4c6a52"/><ellipse cx="12" cy="8" rx="4" ry="4.6" fill="#4a3f36"/><path d="M15 15 L19 26 H14 Z" fill="#6b3a3a" opacity="0.6"/></g><circle cx="12.5" cy="12.5" r="12" fill="none" stroke="#8a8f80" stroke-width="0.8"/></svg>
<div class="b" style="left:1310px;top:1068.5px;width:33px;height:4px;background:#d3dfe3;border-radius:2px"></div>
<div class="b" style="left:1310px;top:1068.5px;width:5px;height:4px;background:#6c7a80;border-radius:2px"></div>
<svg class="s" style="left:1374px;top:1025px;" width="37" height="37" viewBox="0 0 37 37"><g transform="translate(18.5,18.5)"><path d="M0 -18 A18 18 0 0 1 15.6 -9 L0 -9 A9 9 0 0 0 -7.8 4.5 L-15.6 -9 A18 18 0 0 1 0 -18 Z" fill="#e33b2e"/><path d="M15.6 -9 A18 18 0 0 1 0 18 L7.8 4.5 A9 9 0 0 0 0 -9 Z" fill="#fbc116"/><path d="M0 18 A18 18 0 0 1 -15.6 -9 L-7.8 4.5 A9 9 0 0 0 7.8 4.5 Z" fill="#1fa046"/><circle r="8" fill="#fff"/><circle r="6.4" fill="#1b73e8"/></g></svg>
<svg class="s" style="left:1395px;top:1018px;" width="25" height="25" viewBox="0 0 25 25"><g clip-path="url(#avc)"><rect width="25" height="25" fill="url(#avb)"/><path d="M2 26 C2 17 6 12.5 11 12 C16 12.5 19.5 15 20.5 26 Z" fill="#3a4552"/><path d="M0 14 C3 13 5 16 5 26 H0 Z" fill="#4c6a52"/><ellipse cx="12" cy="8" rx="4" ry="4.6" fill="#4a3f36"/><path d="M15 15 L19 26 H14 Z" fill="#6b3a3a" opacity="0.6"/></g><circle cx="12.5" cy="12.5" r="12" fill="none" stroke="#8a8f80" stroke-width="0.8"/></svg>
<div class="b" style="left:1375px;top:1068.5px;width:36px;height:4px;background:#c9d8dc;border-radius:2px"></div>
<div class="b" style="left:1375px;top:1068.5px;width:5px;height:4px;background:#6c7a80;border-radius:2px"></div>
<svg class="s" style="left:1593px;top:1036px;" width="20" height="14" viewBox="0 0 20 14"><path d="M2.4 11.4 L10 3.6 L17.6 11.4" fill="none" stroke="#1a1a1a" stroke-width="1.8"/></svg>
<svg class="s" style="left:1637px;top:1029px;" width="30" height="30" viewBox="0 0 30 30"><g fill="none" stroke="#1a1a1a" stroke-width="1.6"><path d="M24 8.4 A11 11 0 0 0 3.4 13.6"/><path d="M4.6 20.4 A11 11 0 0 0 17 25.6"/><path d="M24.6 3.6 V8.8 H19.4"/><path d="M3.2 25.6 V20.6 H8.4"/></g><circle cx="20.2" cy="21" r="5.6" fill="#f59a0f"/></svg>
<svg class="s" style="left:1685px;top:1033px;" width="28" height="22" viewBox="0 0 28 22"><path d="M2 7.6 A16 16 0 0 1 25 7.6" fill="none" stroke="#b6c3c6" stroke-width="1.8"/><path d="M5.6 11.4 A10.6 10.6 0 0 1 21.4 11.4 M9.2 15 A5.4 5.4 0 0 1 17.8 15" fill="none" stroke="#1a1a1a" stroke-width="1.8"/><circle cx="13.5" cy="18.6" r="1.8" fill="#1a1a1a"/></svg>
<svg class="s" style="left:1721px;top:1032px;" width="28" height="24" viewBox="0 0 28 24"><path d="M1.6 8.4 H5.8 L11.2 3.4 V20.6 L5.8 15.6 H1.6 Z" fill="none" stroke="#1a1a1a" stroke-width="1.6" stroke-linejoin="round"/><path d="M15 8.6 A4.6 4.6 0 0 1 15 15.4 M18.2 5.6 A8.6 8.6 0 0 1 18.2 18.4 M21.4 2.6 A12.6 12.6 0 0 1 21.4 21.4" fill="none" stroke="#1a1a1a" stroke-width="1.6" stroke-linecap="round"/></svg>
<svg class="s" style="left:1757px;top:1035px;" width="28" height="18" viewBox="0 0 28 18"><rect x="1.4" y="1.4" width="21" height="14" rx="3" fill="none" stroke="#1a1a1a" stroke-width="1.8"/><rect x="4.2" y="4.2" width="13" height="8.4" rx="1" fill="#1a1a1a"/><path d="M24 5.6 H25.4 A0.8 0.8 0 0 1 26.2 6.4 V10.4 A0.8 0.8 0 0 1 25.4 11.2 H24 Z" fill="#1a1a1a"/></svg>
<div class="t " style="left:1815px;top:1020.80px;font-size:17.9px;line-height:22px;color:#1a1a1a;font-weight:normal;">10:03 AM</div>
<div class="t " style="left:1808.75px;top:1044.66px;font-size:18.3px;line-height:22px;color:#1a1a1a;font-weight:normal;">7/29/2025</div>
</body></html>
